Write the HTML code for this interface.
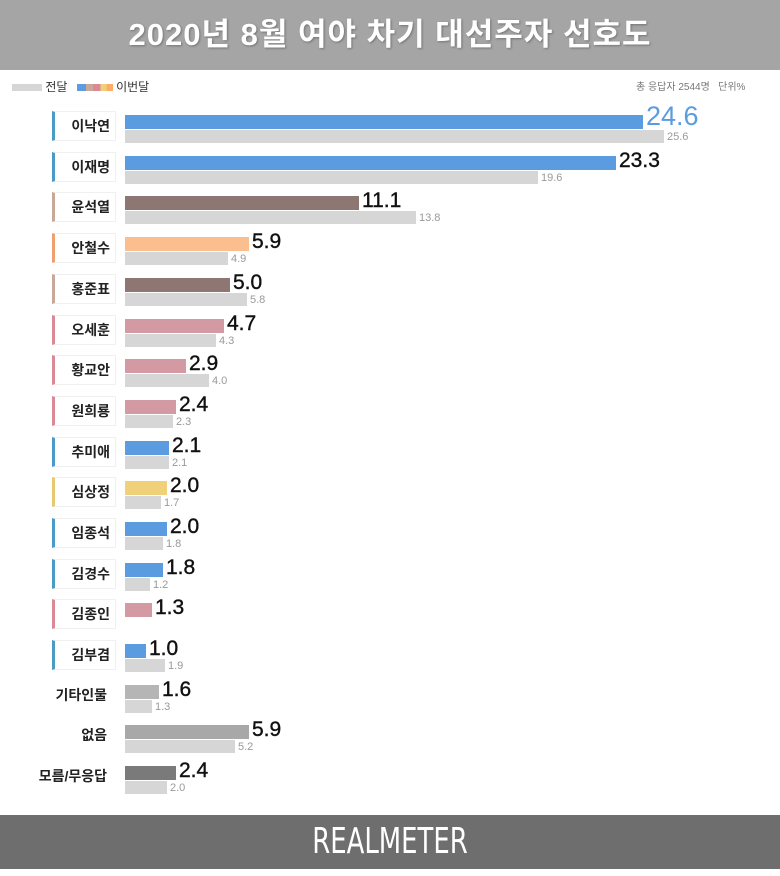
<!DOCTYPE html>
<html><head><meta charset="utf-8"><style>
*{margin:0;padding:0;box-sizing:border-box}
body{width:780px;height:869px;background:#fff;position:relative;overflow:hidden;font-family:"Liberation Sans","Noto Sans CJK KR",sans-serif}
.hd{position:absolute;left:0;top:0;width:780px;height:70px;background:#a5a5a5;color:#fff;font-weight:bold;font-size:31px;text-align:center;line-height:70px;letter-spacing:1px;text-shadow:1px 1px 2px rgba(0,0,0,.3)}
.ft{position:absolute;left:0;top:815px;width:780px;height:54px;background:#6e6e6e;text-align:center;line-height:54px}
.ft span{display:inline-block;color:#fff;font-family:"DejaVu Sans","Liberation Sans",sans-serif;font-size:36px;transform:scaleX(.72);font-weight:normal}
.lg{position:absolute;top:78px;font-size:12px;color:#333}
.r{position:absolute;left:0;width:780px;height:30px}
.lb{position:absolute;left:52px;top:-4px;width:64px;height:30px;border:1px solid #f0f0f0;border-left:3px solid #4a9cc6;text-align:right;padding-right:5px;font-size:14px;font-weight:bold;line-height:28px;color:#222}
.nb{border:none;width:64px;left:48px}
.c,.p{position:absolute;left:125px;display:flex;align-items:flex-end}
.c{top:0;height:14px}
.p{top:15px;height:13px}
.c i,.p i{display:block;height:100%}
.p i{background:#d6d6d6}
.c b{font-size:21px;line-height:20px;margin-left:3px;margin-bottom:-1px;color:#111;font-weight:normal;-webkit-text-stroke:.4px #111}
.p span{font-size:11px;color:#999;margin-left:3px;line-height:11px}
</style></head><body>
<div class="hd">2020년 8월 여야 차기 대선주자 선호도</div>
<div class="lg" style="left:12px"><span style="display:inline-block;width:30px;height:7px;background:#d6d6d6;vertical-align:middle"></span> 전달 <span style="display:inline-block;width:36px;height:7px;vertical-align:middle;margin-left:6px;background:linear-gradient(90deg,#5b9bdf 0 25%,#c9a89a 25% 45%,#d98a95 45% 65%,#f0d17a 65% 82%,#fbae6a 82%)"></span> 이번달</div>
<div class="lg" style="left:636px;font-size:10px;color:#777">총 응답자 2544명 &nbsp; 단위%</div>

<div class="r" style="top:115px"><div class="lb">이낙연</div><div class="c"><i style="width:518px;background:#5b9bdf"></i><b style="color:#5b9bdf;-webkit-text-stroke:0;font-size:27px;line-height:26px;margin-bottom:0">24.6</b></div><div class="p"><i style="width:539px"></i><span>25.6</span></div></div>
<div class="r" style="top:156px"><div class="lb">이재명</div><div class="c"><i style="width:491px;background:#5b9bdf"></i><b>23.3</b></div><div class="p"><i style="width:413px"></i><span>19.6</span></div></div>
<div class="r" style="top:196px"><div class="lb" style="border-left-color:#c9a89a">윤석열</div><div class="c"><i style="width:234px;background:#8e7672"></i><b>11.1</b></div><div class="p"><i style="width:291px"></i><span>13.8</span></div></div>
<div class="r" style="top:237px"><div class="lb" style="border-left-color:#f0a070">안철수</div><div class="c"><i style="width:124px;background:#fbbf8f"></i><b>5.9</b></div><div class="p"><i style="width:103px"></i><span>4.9</span></div></div>
<div class="r" style="top:278px"><div class="lb" style="border-left-color:#c9a89a">홍준표</div><div class="c"><i style="width:105px;background:#8e7672"></i><b>5.0</b></div><div class="p"><i style="width:122px"></i><span>5.8</span></div></div>
<div class="r" style="top:319px"><div class="lb" style="border-left-color:#d98a95">오세훈</div><div class="c"><i style="width:99px;background:#d49aa3"></i><b>4.7</b></div><div class="p"><i style="width:91px"></i><span>4.3</span></div></div>
<div class="r" style="top:359px"><div class="lb" style="border-left-color:#d98a95">황교안</div><div class="c"><i style="width:61px;background:#d49aa3"></i><b>2.9</b></div><div class="p"><i style="width:84px"></i><span>4.0</span></div></div>
<div class="r" style="top:400px"><div class="lb" style="border-left-color:#d98a95">원희룡</div><div class="c"><i style="width:51px;background:#d49aa3"></i><b>2.4</b></div><div class="p"><i style="width:48px"></i><span>2.3</span></div></div>
<div class="r" style="top:441px"><div class="lb">추미애</div><div class="c"><i style="width:44px;background:#5b9bdf"></i><b>2.1</b></div><div class="p"><i style="width:44px"></i><span>2.1</span></div></div>
<div class="r" style="top:481px"><div class="lb" style="border-left-color:#e8c870">심상정</div><div class="c"><i style="width:42px;background:#f0d17a"></i><b>2.0</b></div><div class="p"><i style="width:36px"></i><span>1.7</span></div></div>
<div class="r" style="top:522px"><div class="lb">임종석</div><div class="c"><i style="width:42px;background:#5b9bdf"></i><b>2.0</b></div><div class="p"><i style="width:38px"></i><span>1.8</span></div></div>
<div class="r" style="top:563px"><div class="lb">김경수</div><div class="c"><i style="width:38px;background:#5b9bdf"></i><b>1.8</b></div><div class="p"><i style="width:25px"></i><span>1.2</span></div></div>
<div class="r" style="top:603px"><div class="lb" style="border-left-color:#d98a95">김종인</div><div class="c"><i style="width:27px;background:#d49aa3"></i><b>1.3</b></div></div>
<div class="r" style="top:644px"><div class="lb">김부겸</div><div class="c"><i style="width:21px;background:#5b9bdf"></i><b>1.0</b></div><div class="p"><i style="width:40px"></i><span>1.9</span></div></div>
<div class="r" style="top:685px"><div class="lb nb">기타인물</div><div class="c"><i style="width:34px;background:#b5b5b5"></i><b>1.6</b></div><div class="p"><i style="width:27px"></i><span>1.3</span></div></div>
<div class="r" style="top:725px"><div class="lb nb">없음</div><div class="c"><i style="width:124px;background:#a8a8a8"></i><b>5.9</b></div><div class="p"><i style="width:110px"></i><span>5.2</span></div></div>
<div class="r" style="top:766px"><div class="lb nb" style="width:80px;left:32px">모름/무응답</div><div class="c"><i style="width:51px;background:#7a7a7a"></i><b>2.4</b></div><div class="p"><i style="width:42px"></i><span>2.0</span></div></div>

<div class="ft"><span>REALMETER</span></div>
</body></html>
